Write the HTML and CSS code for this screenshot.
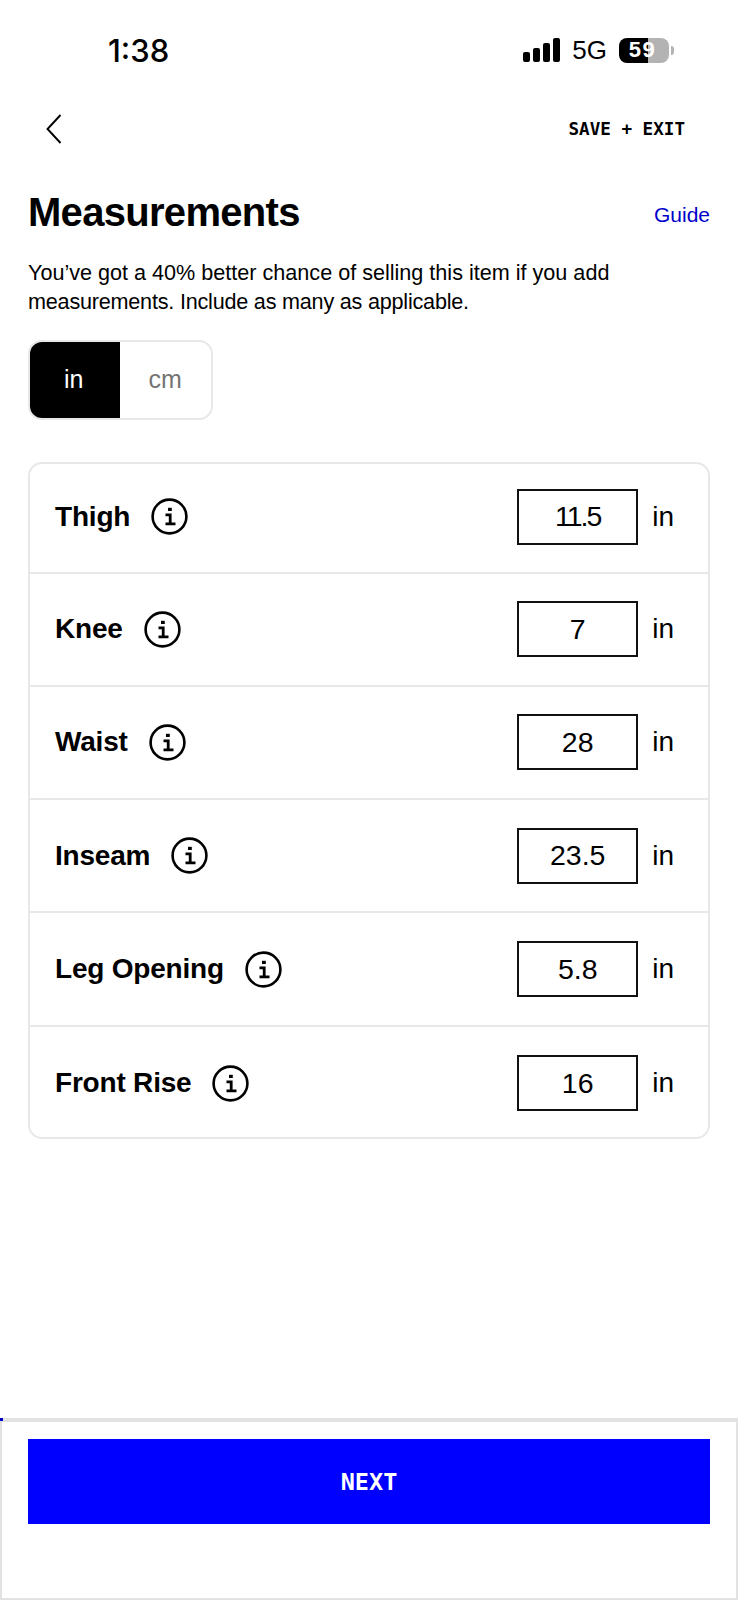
FILE: index.html
```html
<!DOCTYPE html>
<html lang="en">
<head>
<meta charset="utf-8">
<title>Measurements</title>
<link rel="stylesheet" href="styles.css">
</head>
<body>
<div class="page">
  <div class="status">
    <span class="time">1:38</span>
    <div class="status-right">
      <svg class="signal" width="38" height="24" viewBox="0 0 38 24"><rect x="0" y="14" width="7" height="10" rx="2"/><rect x="10" y="10" width="7" height="14" rx="2"/><rect x="20" y="5" width="7" height="19" rx="2"/><rect x="30" y="0" width="7" height="24" rx="2"/></svg>
      <span class="net">5G</span>
      <div class="battery"><span class="battery-num">59</span></div>
      <span class="battery-tip"></span>
    </div>
  </div>
  <div class="nav">
    <svg class="back" width="16" height="30" viewBox="0 0 16 30"><path d="M14.5 1 L1.5 15 L14.5 29" fill="none" stroke="#000" stroke-width="1.9"/></svg>
    <span class="save">SAVE + EXIT</span>
  </div>
  <div class="head">
    <h1 class="title">Measurements</h1>
    <a class="guide">Guide</a>
  </div>
  <p class="intro">You’ve got a 40% better chance of selling this item if you add<br><span class="intro-second">measurements. Include as many as applicable.</span></p>
  <div class="toggle">
    <span class="unit active">in</span>
    <span class="unit">cm</span>
  </div>
  <div class="card">
    <div class="row">
      <span class="label">Thigh</span>
      <svg class="info" width="37" height="37" viewBox="0 0 37 37"><circle cx="18.5" cy="18.5" r="16.9"/><rect class="ink" x="17" y="9.8" width="3.8" height="3.2"/><path class="stem" d="M14.5 16.8H19.2V26M14.5 25.8H24.5"/></svg>
      <span class="value tight">11.5</span><span class="suffix">in</span>
    </div>
    <div class="row">
      <span class="label">Knee</span>
      <svg class="info" width="37" height="37" viewBox="0 0 37 37"><circle cx="18.5" cy="18.5" r="16.9"/><rect class="ink" x="17" y="9.8" width="3.8" height="3.2"/><path class="stem" d="M14.5 16.8H19.2V26M14.5 25.8H24.5"/></svg>
      <span class="value">7</span><span class="suffix">in</span>
    </div>
    <div class="row">
      <span class="label">Waist</span>
      <svg class="info" width="37" height="37" viewBox="0 0 37 37"><circle cx="18.5" cy="18.5" r="16.9"/><rect class="ink" x="17" y="9.8" width="3.8" height="3.2"/><path class="stem" d="M14.5 16.8H19.2V26M14.5 25.8H24.5"/></svg>
      <span class="value">28</span><span class="suffix">in</span>
    </div>
    <div class="row">
      <span class="label">Inseam</span>
      <svg class="info" width="37" height="37" viewBox="0 0 37 37"><circle cx="18.5" cy="18.5" r="16.9"/><rect class="ink" x="17" y="9.8" width="3.8" height="3.2"/><path class="stem" d="M14.5 16.8H19.2V26M14.5 25.8H24.5"/></svg>
      <span class="value">23.5</span><span class="suffix">in</span>
    </div>
    <div class="row">
      <span class="label">Leg Opening</span>
      <svg class="info" width="37" height="37" viewBox="0 0 37 37"><circle cx="18.5" cy="18.5" r="16.9"/><rect class="ink" x="17" y="9.8" width="3.8" height="3.2"/><path class="stem" d="M14.5 16.8H19.2V26M14.5 25.8H24.5"/></svg>
      <span class="value">5.8</span><span class="suffix">in</span>
    </div>
    <div class="row">
      <span class="label">Front Rise</span>
      <svg class="info" width="37" height="37" viewBox="0 0 37 37"><circle cx="18.5" cy="18.5" r="16.9"/><rect class="ink" x="17" y="9.8" width="3.8" height="3.2"/><path class="stem" d="M14.5 16.8H19.2V26M14.5 25.8H24.5"/></svg>
      <span class="value">16</span><span class="suffix">in</span>
    </div>
  </div>
  <div class="spacer"></div>
  <div class="footer">
    <span class="progress"></span>
    <button class="next">NEXT</button>
  </div>
</div>
</body>
</html>
```
FILE: styles.css
```css
* { box-sizing: border-box; }
html, body { margin: 0; padding: 0; background: #fff; }
body { font-family: "Liberation Sans", Arial, sans-serif; color: #000; }
.page { width: 738px; height: 1600px; display: flex; flex-direction: column; }
.status { height: 100px; display: flex; align-items: center; justify-content: space-between; padding: 0 64px 0 108px; }
.time { font-family: Inter, sans-serif; font-size: 31px; font-weight: 500; line-height: 1; }
.status-right { display: flex; align-items: center; }
.signal { fill: #000; margin-right: 11px; }
.net { font-size: 26px; font-weight: 400; margin-right: 12px; }
.battery { width: 50px; height: 25px; border-radius: 8px; background: linear-gradient(90deg, #000 0 57%, #b3b3b3 57% 100%); display: flex; align-items: center; justify-content: center; padding-right: 3px; }
.battery-num { color: #fff; font-size: 22px; font-weight: 700; line-height: 1; letter-spacing: 1.5px; }
.battery-tip { width: 3px; height: 9px; background: #b3b3b3; border-radius: 0 3px 3px 0; margin-left: 2px; }
.nav { height: 58px; display: flex; align-items: center; justify-content: space-between; padding: 0 53px 0 46px; }
.save { font-family: "DejaVu Sans Mono", monospace; font-weight: 700; font-size: 17.6px; white-space: nowrap; }
.head { margin-top: 23px; padding: 0 28px; display: flex; justify-content: space-between; align-items: center; height: 62px; }
.title { margin: 0; font-size: 40px; font-weight: 700; letter-spacing: -0.7px; line-height: 1; }
.guide { color: #0000cc; font-size: 21px; margin-top: 6px; }
.intro { margin: 16px 28px 0; font-size: 21.6px; line-height: 28.5px; }
.intro-second { letter-spacing: -0.21px; }
.toggle { margin: 23.5px 0 0 28px; width: 185px; height: 80px; border: 2px solid #e8e8e8; border-radius: 14px; display: flex; overflow: hidden; }
.unit { flex: 1; display: flex; align-items: center; justify-content: center; font-size: 25px; color: #757575; }
.unit.active { background: #000; color: #fff; margin: -2px 0 -2px -2px; }
.card { margin: 42px 28px 0; height: 677px; border: 2px solid #e8e8e8; border-radius: 14px; display: flex; flex-direction: column; }
.row { height: 113.3px; display: flex; align-items: center; padding: 0 34px 0 25px; border-bottom: 2px solid #e8e8e8; }
.row:first-child { height: 110px; padding-bottom: 2px; }
.row:last-child { flex: 1; border-bottom: 0; padding-top: 3px; }
.label { font-size: 28px; font-weight: 700; letter-spacing: -0.2px; margin-right: 21px; }
.info { fill: none; }
.info circle { stroke: #000; stroke-width: 2.6; fill: none; }
.stem { stroke: #000; stroke-width: 2.8; fill: none; }
.ink { fill: #000; }
.value { margin-left: auto; width: 121px; height: 56px; border: 2px solid #111; display: flex; align-items: center; justify-content: center; font-size: 28.5px; }
.value.tight { letter-spacing: -2px; }
.suffix { font-size: 28px; margin-left: 14px; }
.spacer { flex: 1; }
.footer { position: relative; height: 182px; border: 2px solid #e2e2e2; border-top-width: 4px; padding: 17px 26px 0; }
.progress { position: absolute; left: -2px; top: -4px; width: 3px; height: 3px; background: #0000cc; }
.next { display: block; width: 100%; height: 85px; border: 0; background: #0000ff; color: #fff; font-family: "DejaVu Sans Mono", monospace; font-weight: 700; font-size: 23.5px; }
```
